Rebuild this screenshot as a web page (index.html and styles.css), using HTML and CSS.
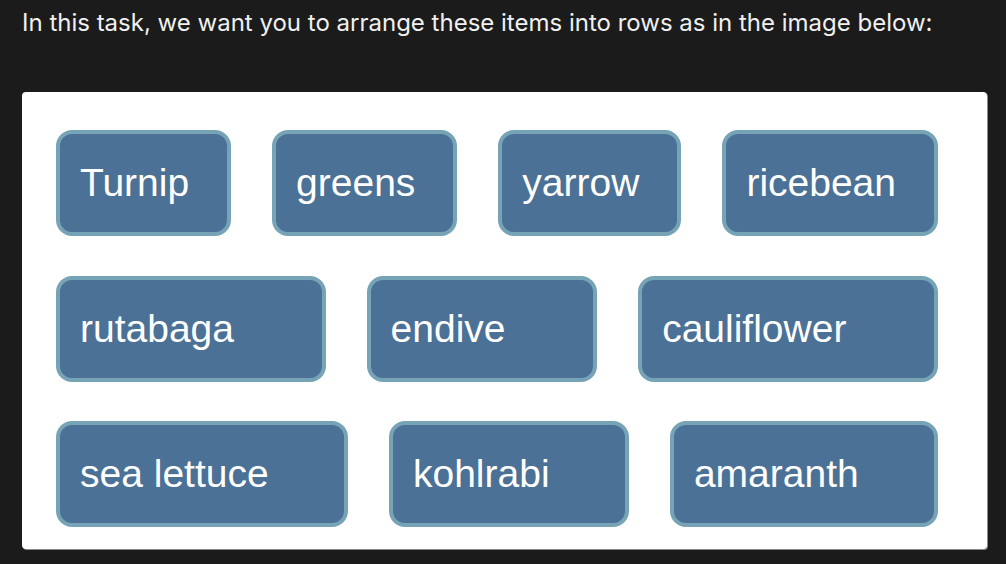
FILE: index.html
```html
<!DOCTYPE html>
<html>
<head>
<meta charset="utf-8">
<link rel="stylesheet" href="styles.css">
</head>
<body>
<p class="prompt">In this task, we want you to arrange these items into rows as in the image below:</p>
<div class="card">
  <div class="row">
    <div class="chip">Turnip</div>
    <div class="chip">greens</div>
    <div class="chip">yarrow</div>
    <div class="chip">ricebean</div>
  </div>
  <div class="row">
    <div class="chip">rutabaga</div>
    <div class="chip">endive</div>
    <div class="chip">cauliflower</div>
  </div>
  <div class="row">
    <div class="chip">sea lettuce</div>
    <div class="chip">kohlrabi</div>
    <div class="chip">amaranth</div>
  </div>
</div>
</body>
</html>
```
FILE: styles.css
```css
html, body {
  margin: 0;
  padding: 0;
  background: #1b1b1b;
}
body {
  padding: 0 19px 0 22px;
  height: 564px;
  box-sizing: border-box;
  overflow: hidden;
}
.prompt {
  margin: 0;
  padding-top: 8px;
  height: 92px;
  box-sizing: border-box;
  font-family: Inter, "Liberation Sans", sans-serif;
  font-size: 24px;
  line-height: 29px;
  color: #f0f0f0;
  white-space: nowrap;
}
.card {
  background: #ffffff;
  border-radius: 4px;
  height: 457px;
  box-sizing: border-box;
  padding: 38px 49px 22px 34px;
  display: flex;
  flex-direction: column;
  gap: 39.5px;
  box-shadow: 1px 1px 0 #8a8a8a;
}
.row {
  display: flex;
  gap: 41px;
}
.chip {
  flex: 1 1 auto;
  height: 106px;
  box-sizing: border-box;
  display: flex;
  align-items: center;
  padding: 0 20px 0 20px;
  background: #4b7196;
  border: 4px solid #76a4b6;
  border-radius: 16px;
  font-family: "Liberation Sans", Arial, sans-serif;
  font-size: 39px;
  color: #ffffff;
  white-space: nowrap;
}
```
